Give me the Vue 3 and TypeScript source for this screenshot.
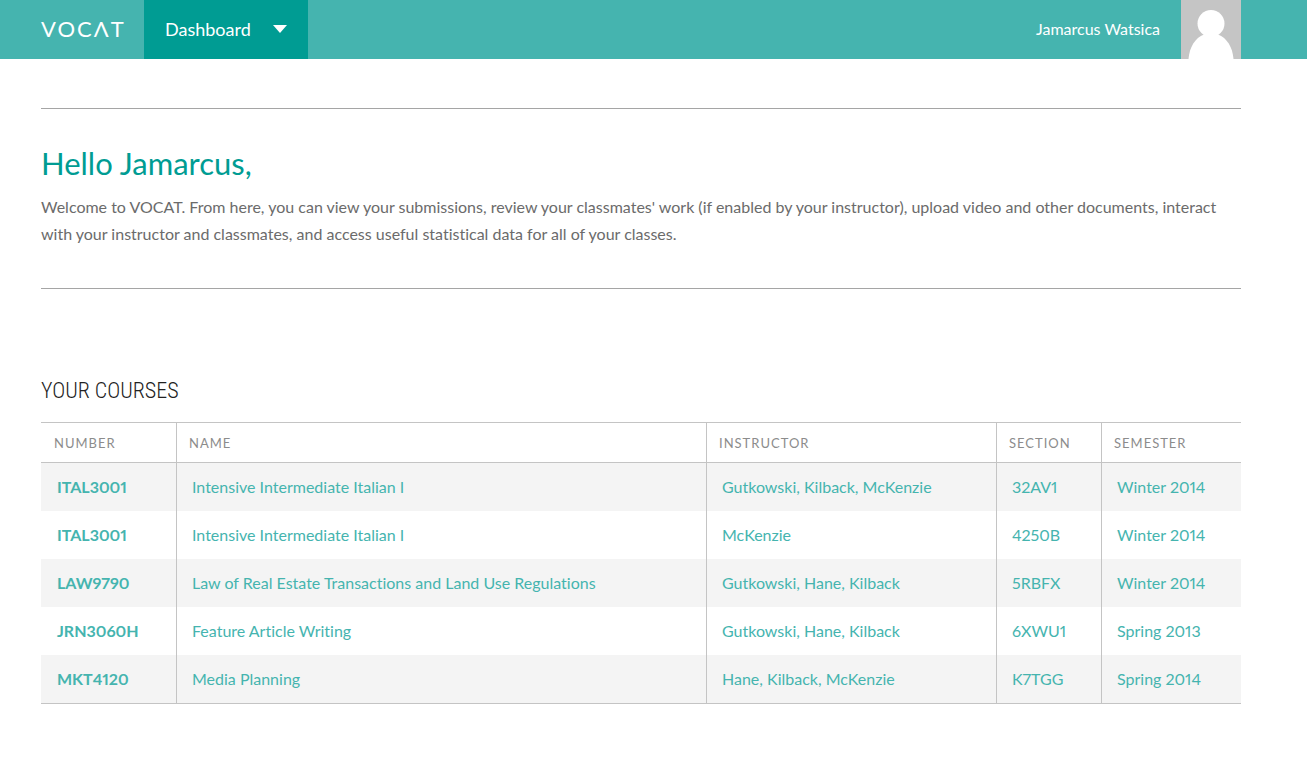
<script setup lang="ts">
interface Course {
  number: string
  name: string
  instructors: string[]
  section: string
  semester: string
}

const columns: string[] = ['Number', 'Name', 'Instructor', 'Section', 'Semester']

const courses: Course[] = [
  { number: 'ITAL3001', name: 'Intensive Intermediate Italian I', instructors: ['Gutkowski', 'Kilback', 'McKenzie'], section: '32AV1', semester: 'Winter 2014' },
  { number: 'ITAL3001', name: 'Intensive Intermediate Italian I', instructors: ['McKenzie'], section: '4250B', semester: 'Winter 2014' },
  { number: 'LAW9790', name: 'Law of Real Estate Transactions and Land Use Regulations', instructors: ['Gutkowski', 'Hane', 'Kilback'], section: '5RBFX', semester: 'Winter 2014' },
  { number: 'JRN3060H', name: 'Feature Article Writing', instructors: ['Gutkowski', 'Hane', 'Kilback'], section: '6XWU1', semester: 'Spring 2013' },
  { number: 'MKT4120', name: 'Media Planning', instructors: ['Hane', 'Kilback', 'McKenzie'], section: 'K7TGG', semester: 'Spring 2014' },
]
</script>

<template>
  <div class="page">
    <header class="topbar">
      <a class="logo" href="#" aria-label="VOCAT">VOCΛT</a>
      <button class="menu" type="button" aria-haspopup="true">
        <span>Dashboard</span>
        <svg class="caret" viewBox="0 0 14 8" aria-hidden="true"><path d="M0 0H14L7 8Z" fill="#fff" /></svg>
      </button>
      <a class="user" href="#">
        <span class="label">Jamarcus Watsica</span>
        <svg class="avatar" viewBox="0 0 60 59" aria-hidden="true">
          <rect width="60" height="59" fill="#c5c5c5" />
          <circle cx="30" cy="23.5" r="13.5" fill="#fff" />
          <path d="M7.5 59C8.5 47 14 38 23 34.5H37C46 38 51.5 47 52.5 59Z" fill="#fff" />
        </svg>
      </a>
    </header>

    <main class="content">
      <section class="intro">
        <h1>Hello Jamarcus,</h1>
        <p>
          Welcome to VOCAT. From here, you can view your submissions, review your classmates' work (if enabled by your
          instructor), upload video and other documents, interact with your instructor and classmates, and access useful
          statistical data for all of your classes.
        </p>
      </section>

      <section class="courses">
        <h2 id="courses-title">Your Courses</h2>
        <table aria-labelledby="courses-title">
          <colgroup>
            <col class="col-number" />
            <col />
            <col class="col-instructor" />
            <col class="col-section" />
            <col class="col-semester" />
          </colgroup>
          <thead>
            <tr>
              <th v-for="column in columns" :key="column" scope="col">{{ column }}</th>
            </tr>
          </thead>
          <tbody>
            <tr v-for="course in courses" :key="course.section">
              <td class="number"><a href="#">{{ course.number }}</a></td>
              <td><a href="#">{{ course.name }}</a></td>
              <td><a href="#">{{ course.instructors.join(', ') }}</a></td>
              <td><a href="#">{{ course.section }}</a></td>
              <td><a href="#">{{ course.semester }}</a></td>
            </tr>
          </tbody>
        </table>
      </section>
    </main>
  </div>
</template>

<style>
body {
  margin: 0;
  background: #fff;
}
</style>

<style scoped>
.page {
  font-family: Lato, "Liberation Sans", sans-serif;
  font-size: 16px;
  font-variant-ligatures: none;
  font-variant-numeric: proportional-nums;
  color: #6b6b6b;
}

a {
  color: inherit;
  text-decoration: none;
}

.topbar {
  display: flex;
  align-items: stretch;
  height: 59px;
  padding: 0 66px 0 41px;
  background: #45b4af;
  color: #fff;
}

.logo {
  box-sizing: border-box;
  display: flex;
  align-items: center;
  width: 103px;
  padding-bottom: 2px;
  font-size: 22px;
  letter-spacing: 2px;
}

.menu {
  display: flex;
  align-items: center;
  gap: 22px;
  padding: 0 21px 2px;
  border: 0;
  background: #009c93;
  color: #fff;
  font: inherit;
  font-size: 18px;
  cursor: pointer;
}

.label {
  padding-bottom: 3px;
}

.caret {
  width: 14px;
  height: 8px;
}

.user {
  display: flex;
  align-items: center;
  gap: 21px;
  margin-left: auto;
}

.avatar {
  display: block;
  width: 60px;
  height: 59px;
}

.content {
  padding: 49px 66px 54px 41px;
}

.intro {
  border-top: 1px solid #a5a5a5;
  border-bottom: 1px solid #a5a5a5;
  padding: 34px 0 41px;
}

h1 {
  margin: 0 0 10px;
  color: #009c93;
  font-size: 31px;
  font-weight: 400;
  line-height: 40px;
}

p {
  margin: 0;
  line-height: 27px;
}

.courses {
  margin-top: 87px;
}

h2 {
  margin: 0 0 16px;
  color: #222;
  font-family: "Roboto Condensed", Roboto, sans-serif;
  font-size: 22px;
  font-weight: 300;
  line-height: 30px;
  text-transform: uppercase;
}

table {
  width: 100%;
  table-layout: fixed;
  border-collapse: separate;
  border-spacing: 0;
  border-top: 1px solid #c4c4c4;
  border-bottom: 1px solid #c4c4c4;
}

.col-number {
  width: 135px;
}

.col-instructor {
  width: 290px;
}

.col-section {
  width: 105px;
}

.col-semester {
  width: 140px;
}

th {
  box-sizing: border-box;
  height: 40px;
  padding: 0 13px;
  border-bottom: 1px solid #c4c4c4;
  color: #8c8c8c;
  font-size: 13px;
  font-weight: 400;
  letter-spacing: 1px;
  text-align: left;
  text-transform: uppercase;
}

td {
  box-sizing: border-box;
  height: 48px;
  padding: 0 16px 2px;
  color: #45b4af;
}

th + th,
td + td {
  border-left: 1px solid #c4c4c4;
}

th + th {
  padding-left: 12px;
}

td + td {
  padding-left: 15px;
}

.number {
  font-weight: 700;
}

tbody tr:nth-child(odd) {
  background: #f4f4f4;
}
</style>
